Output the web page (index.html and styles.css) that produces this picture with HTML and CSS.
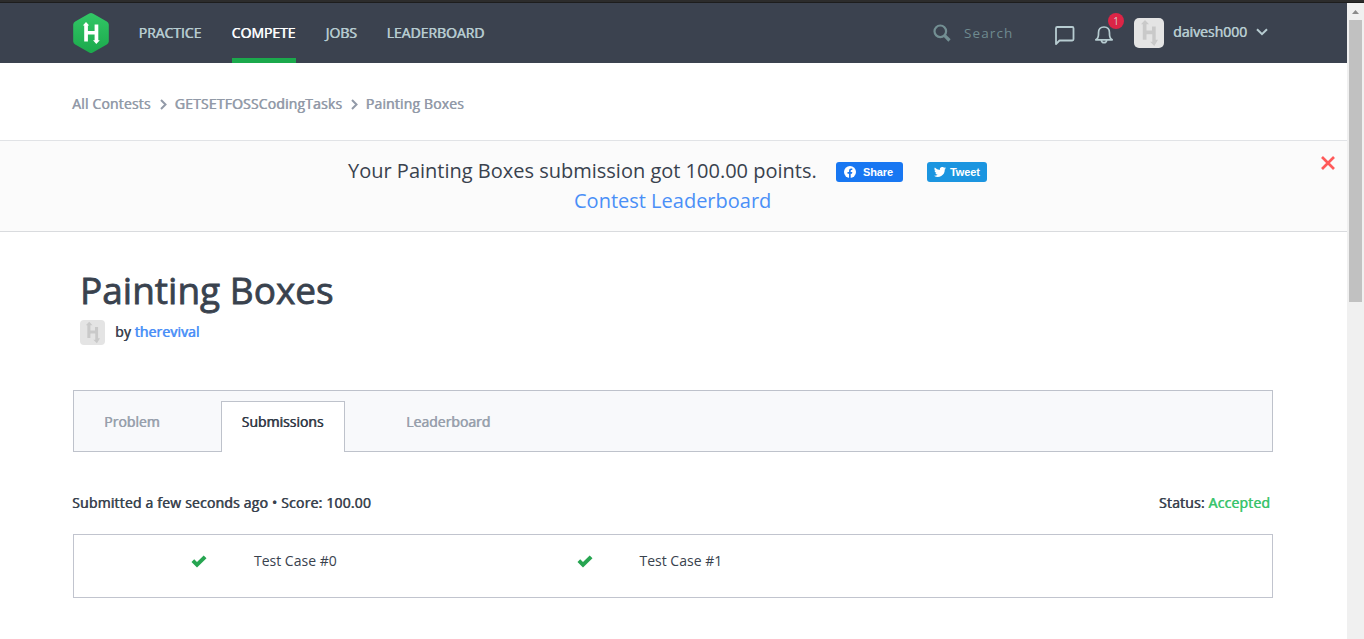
FILE: index.html
```html
<!DOCTYPE html>
<html lang="en">
<head>
<meta charset="utf-8">
<title>Painting Boxes</title>
<link rel="stylesheet" href="styles.css">
</head>
<body>
<svg class="defs" width="0" height="0">
  <defs>
    <symbol id="mark" viewBox="0 0 30 30">
      <path d="M11 2l4 4.200h-2.500v6.300h5.500V8.500h3.700v13.300h2.300L20.300 28l-4.300-4.200h2.300V16.200h-5.800v5.500H8.800V6.200H7z"/>
    </symbol>
    <symbol id="check" viewBox="0 0 16 13"><path d="M.5 7L3.200 4.200 6 7 12.700.5 15.500 3.200 6 12.500z"/></symbol>
  </defs>
</svg>
<div class="strip"></div>
<div class="window">
  <div class="page">
    <header class="nav">
      <svg class="logo" viewBox="0 0 36 40">
        <defs><linearGradient id="green" x1="0" y1="0" x2="0" y2="1"><stop offset="0" stop-color="#32c766"/><stop offset="1" stop-color="#1ba94c"/></linearGradient></defs>
        <path fill="url(#green)" d="M16.200.6q1.800-1 3.600 0l14 8q1.800 1 2 3v16.800q-.2 2-2 3l-14 8q-1.800 1-3.600 0l-14-8q-1.800-1-2-3V11.600q.2-2 2-3z"/>
        <path fill="#fff" d="M13 9l3.200 3.500h-1.300V18h6.700v-6.500h3.700v15.800h1.500L23.300 31 20 27.300h1.600v-5.900h-6.700v7.100H11.200v-16H9.800z"/>
      </svg>
      <nav class="menu">
        <a class="item practice">PRACTICE</a>
        <a class="item compete active">COMPETE</a>
        <a class="item jobs">JOBS</a>
        <a class="item leaders">LEADERBOARD</a>
      </nav>
      <div class="tools">
        <svg class="magnifier" viewBox="0 0 18 18"><circle cx="7.300" cy="7.300" r="5.800" fill="none" stroke="currentColor" stroke-width="2.200"/><path d="M11.700 11.700l4.800 4.800" stroke="currentColor" stroke-width="3.200"/></svg>
        <span class="search">Search</span>
        <svg class="chat" viewBox="0 0 20 20" fill="none" stroke="currentColor" stroke-width="1.800" stroke-linejoin="round"><path d="M1 18V2.200Q1 1 2.200 1H17.300Q18.500 1 18.500 2.200V13.300Q18.500 14.500 17.300 14.500H4.500z"/></svg>
        <div class="alerts">
          <svg class="bell" viewBox="0 0 18 18" fill="none" stroke="currentColor" stroke-width="1.700" stroke-linejoin="round"><path d="M.8 13.800Q3.500 12.500 3.500 8V6.800Q3.500 1 9 1t5.500 5.800V8q0 4.500 2.700 5.800zM6.300 14.300q.4 2.400 2.700 2.400t2.700-2.400"/></svg>
          <span class="badge">1</span>
        </div>
        <span class="avatar"><svg><use href="#mark"/></svg></span>
        <span class="user">daivesh000</span>
        <svg class="caret" viewBox="0 0 12 8"><path d="M1 1.200l5 5 5-5" fill="none" stroke="currentColor" stroke-width="2"/></svg>
      </div>
    </header>
    <div class="crumbs">
      <a class="c1">All Contests</a>
      <svg viewBox="0 0 7 11"><path d="M1 1l4.500 4.500L1 10" fill="none" stroke="currentColor" stroke-width="2"/></svg>
      <a class="c2">GETSETFOSSCodingTasks</a>
      <svg viewBox="0 0 7 11"><path d="M1 1l4.500 4.500L1 10" fill="none" stroke="currentColor" stroke-width="2"/></svg>
      <a class="c3">Painting Boxes</a>
    </div>
    <section class="notice">
      <div class="row">
        <span class="result">Your Painting Boxes submission got 100.00 points.</span>
        <a class="share fb"><svg viewBox="0 0 12 12"><circle cx="6" cy="6" r="6" fill="#fff"/><path fill="#1877f2" d="M5 12V7.700H3.500V6H5V4.700q0-2.200 2.100-2.200h1.200v1.500h-.8q-.8 0-.8.900V6h1.600l-.3 1.700H6.700V12z"/></svg>Share</a>
        <a class="share tw"><svg viewBox="0 0 24 20"><path fill="#fff" d="M24 2.400a10 10 0 0 1-2.800.8A5 5 0 0 0 23.300.5a10 10 0 0 1-3.100 1.200 4.900 4.900 0 0 0-8.400 4.500A14 14 0 0 1 1.700 1a4.900 4.900 0 0 0 1.500 6.600A5 5 0 0 1 1 7a4.900 4.900 0 0 0 3.900 4.900 5 5 0 0 1-2.200.1 4.900 4.900 0 0 0 4.600 3.400A9.900 9.900 0 0 1 0 17.500a14 14 0 0 0 21.500-12.400A10 10 0 0 0 24 2.400z"/></svg>Tweet</a>
      </div>
      <a class="board">Contest Leaderboard</a>
      <svg class="close" viewBox="0 0 14 14"><path d="M1 1l12 12M13 1L1 13" stroke="#ff5a5a" stroke-width="2.700"/></svg>
    </section>
    <main class="content">
      <h1 class="title">Painting Boxes</h1>
      <div class="author"><span class="avatar small"><svg><use href="#mark"/></svg></span><span class="by">by <a>therevival</a></span></div>
      <div class="tabs">
        <a class="tab problem">Problem</a>
        <a class="tab current">Submissions</a>
        <a class="tab ranks">Leaderboard</a>
      </div>
      <div class="summary">
        <span class="when">Submitted a few seconds ago • Score: 100.00</span>
        <span class="status">Status: <b>Accepted</b></span>
      </div>
      <div class="cases">
        <div class="case"><svg><use href="#check"/></svg><span>Test Case #0</span></div>
        <div class="case"><svg><use href="#check"/></svg><span>Test Case #1</span></div>
      </div>
    </main>
  </div>
  <div class="scroll"><i class="up"></i><div class="thumb"></div></div>
</div>
</body>
</html>
```
FILE: styles.css
```css
* { box-sizing: border-box; }
body { margin: 0; height: 639px; overflow: hidden; background: #fff; color: #39424e; font: 14px/20px "Open Sans", "Noto Sans", sans-serif; white-space: nowrap; }
svg { display: block; flex: none; }
.defs { position: absolute; }
.strip { height: 3px; background: #2c2c2c; border-bottom: 1px solid #1d1d1d; }
.window { display: flex; height: 636px; }
.page { width: 1347px; }

/* Regular weight, thickened sideways */
.item, .user, .crumbs, .by, .tabs, .summary { text-shadow: .6px 0 0 currentColor; }

.nav { height: 60px; background: #3b424f; display: flex; color: #b7ccd1; padding-left: 73px; }
.logo { width: 36px; height: 40px; margin-top: 10px; }
.menu { display: flex; margin-left: 30px; gap: 30px; }
.item { height: 60px; padding-top: 20px; letter-spacing: -.04px; text-indent: -.5px; }
.practice { width: 63px; }
.compete { width: 64px; }
.jobs { width: 31px; }
.leaders { width: 98px; }
.active { color: #fff; border-bottom: 5px solid #1ba94c; }
.tools { display: flex; margin-left: 448px; }
.magnifier { width: 18px; height: 18px; margin-top: 21px; color: #738f93; }
.search { margin: 20px 0 0 13px; width: 91px; color: #6f8a8f; font-size: 13.500px; letter-spacing: 1.100px; }
.chat { width: 20px; height: 20px; margin-top: 23px; }
.alerts { position: relative; width: 18px; margin: 23px 0 0 20px; }
.bell { width: 18px; height: 18px; }
.badge { position: absolute; left: 13px; top: -13px; width: 16px; height: 16px; border-radius: 50%; background: #dc2546; color: #d5c9cf; font-size: 10px; line-height: 16px; text-align: center; }
.avatar { width: 30px; height: 30px; border-radius: 5px; background: #e4e4e4; margin: 15px 0 0 21px; flex: none; }
.avatar svg { width: 100%; height: 100%; fill: #c9c9c9; }
.user { margin: 19px 0 0 9px; width: 75px; }
.caret { width: 12px; height: 8px; margin: 25px 0 0 8px; }

.crumbs { height: 77px; display: flex; padding: 31px 0 0 72px; color: #929aa8; letter-spacing: .16px; }
.crumbs svg { width: 7px; height: 11px; margin: 5px 8px 0 9px; }
.c1 { width: 79px; }
.c2 { width: 167px; text-indent: -.4px; }
.c3 { width: 100px; text-indent: -.4px; }

.notice { position: relative; height: 92px; border-top: 1px solid #e1e3e6; border-bottom: 1px solid #d9dbde; background: #fbfbfb; padding-top: 15px; }
.row { height: 30px; display: flex; padding-left: 348px; }
.result { width: 488px; font-size: 20px; line-height: 30px; }
.share { display: flex; align-items: center; height: 20px; margin-top: 6px; border-radius: 3px; color: #fff; font: bold 11px/20px "Liberation Sans", Arial, sans-serif; letter-spacing: -.1px; }
.fb { width: 67px; background: #1877f2; padding-left: 8px; }
.fb svg { width: 12px; height: 12px; margin-right: 7px; }
.tw { width: 60px; background: #1b95e0; margin-left: 24px; padding-left: 7px; }
.tw svg { width: 12px; height: 10px; margin-right: 4px; }
.board { display: block; margin-left: 574px; font-size: 20px; line-height: 30px; color: #4a8ff7; }
.close { position: absolute; left: 1321px; top: 15px; width: 14px; height: 14px; }

.content { padding: 33px 74px 0 73px; }
.title { margin: 0 0 0 7px; font-size: 37px; line-height: 50px; height: 55px; font-weight: 400; -webkit-text-stroke: .8px; }
.author { display: flex; margin-left: 7px; height: 70px; }
.small { width: 25px; height: 25px; margin: 0 10px 0 0; border-radius: 4px; }
.by { margin-top: 2px; letter-spacing: .1px; }
.by a { color: #4a8ff7; }
.tabs { height: 62px; border: 1px solid #bec2cb; background: #f8f9fb; display: flex; padding-top: 10px; color: #979fac; }
.tab { padding-top: 11px; }
.problem { padding-left: 30px; width: 147px; }
.current { width: 124px; height: 51px; padding: 10px 0 0 19.500px; border: 1px solid #bec2cb; border-bottom: 0; background: #fff; color: #303846; }
.ranks { margin-left: 61px; }
.summary { display: flex; justify-content: space-between; height: 82px; padding: 41px 3px 0 0; margin-left: -1px; letter-spacing: .19px; }
.status b { font-weight: 400; color: #39c46d; }
.cases { height: 64px; border: 1px solid #c1c4ce; display: flex; padding: 16px 0 0 117px; }
.case { width: 385.500px; display: flex; }
.case svg { width: 16px; height: 13px; margin: 4px 47px 0 0; fill: #27a551; }

.scroll { width: 17px; background: #f0f0f0; padding: 7px 2px 0; }
.up { display: block; width: 7px; height: 4px; margin: 0 0 6px 3px; background: #8b8b8b; clip-path: polygon(50% 0, 100% 100%, 0 100%); }
.thumb { width: 13px; height: 282px; background: #c1c1c1; }
```
